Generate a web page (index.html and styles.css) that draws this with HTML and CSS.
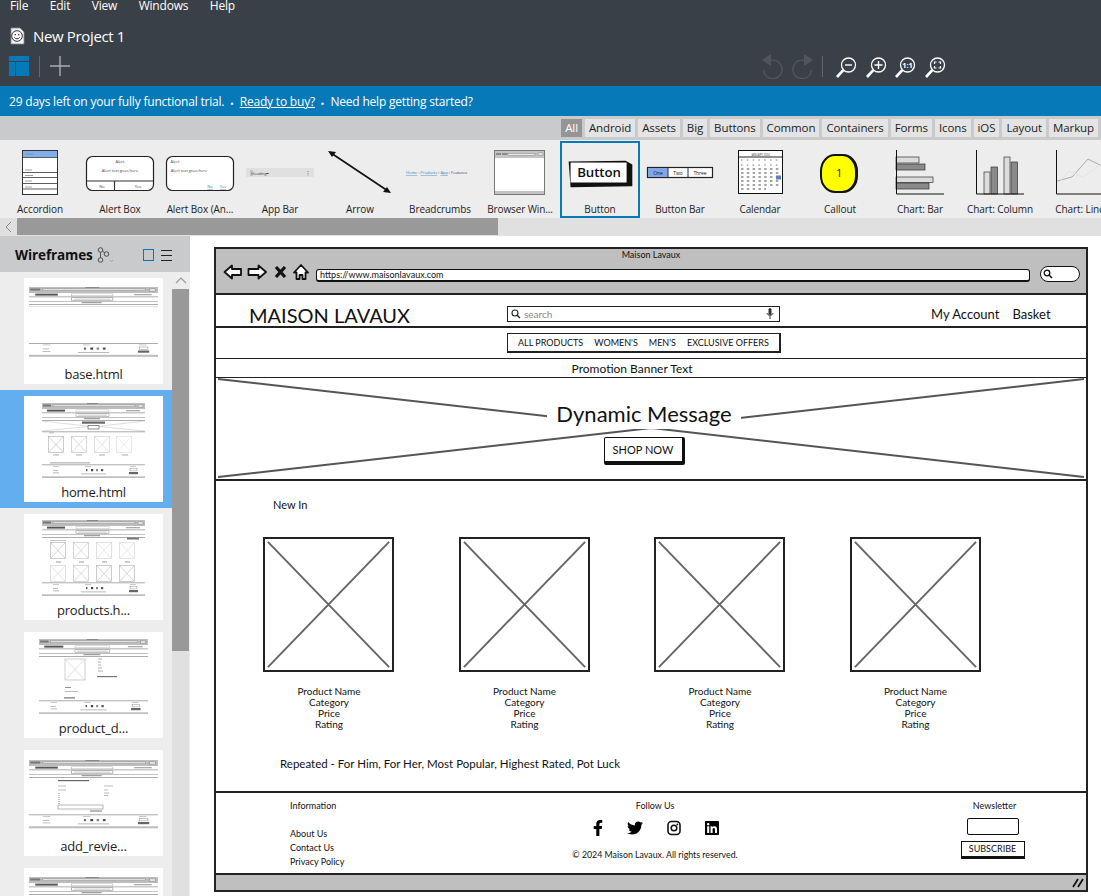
FILE: index.html
```html
<!DOCTYPE html>
<html lang="en">
<head>
    <meta charset="UTF-8">
    <meta name="viewport" content="width=device-width, initial-scale=1.0">
    <title>New Project 1</title>
    <link rel="stylesheet" href="styles.css">
</head>
<body>
    <!-- shared bits of the small page previews -->
    <svg class="defs" width="0" height="0" aria-hidden="true">
        <defs>
            <g id="mini-top">
                <rect width="103" height="6" fill="#bdbdbd"/>
                <rect x="11" y="2" width="82" height="1.6" fill="#fff" stroke="#666" stroke-width=".4"/>
                <rect x="1" y="1.5" width="8" height="2" fill="#777"/>
                <rect x="96" y="2" width="5" height="2" fill="#fff" stroke="#666" stroke-width=".4"/>
                <rect x="45" y="0" width="11" height="1" fill="#888"/>
                <rect x="5" y="6.6" width="18" height="2" fill="#555"/>
                <rect x="34" y="6.8" width="33" height="2" fill="#fff" stroke="#aaa" stroke-width=".4"/>
                <rect x="84" y="7" width="14" height="1.3" fill="#aaa"/>
                <rect y="9.6" width="103" height=".6" fill="#777"/>
                <rect x="34" y="10.8" width="33" height="2.6" fill="#fff" stroke="#666" stroke-width=".4"/>
                <rect x="36" y="11.7" width="29" height=".8" fill="#bbb"/>
                <rect y="14.2" width="103" height=".6" fill="#999"/>
                <rect x="42" y="15.2" width="16" height="1" fill="#888"/>
                <rect y="17" width="103" height=".7" fill="#888"/>
            </g>
            <g id="mini-foot">
                <rect y="0" width="103" height=".7" fill="#888"/>
                <rect x="11" y="1.5" width="6" height=".8" fill="#bbb"/>
                <rect x="11" y="5.5" width="5" height=".8" fill="#aaa"/>
                <rect x="11" y="8" width="6" height=".8" fill="#aaa"/>
                <rect x="43" y="1.5" width="6" height=".8" fill="#bbb"/>
                <rect x="44" y="4.5" width="1.4" height="2.2" fill="#555"/>
                <rect x="49" y="4.5" width="2.2" height="2.2" fill="#444"/>
                <rect x="54" y="4.5" width="2" height="2.2" fill="#888"/>
                <rect x="59" y="4.5" width="2.2" height="2.2" fill="#555"/>
                <rect x="39" y="9" width="25" height=".8" fill="#aaa"/>
                <rect x="88" y="1.5" width="6" height=".8" fill="#bbb"/>
                <rect x="88" y="4" width="7" height="2.4" fill="#fff" stroke="#777" stroke-width=".4"/>
                <rect x="87" y="7.5" width="9" height="2.2" fill="#666"/>
                <rect y="11.8" width="103" height="2" fill="#bdbdbd"/>
            </g>
            <g id="mini-box">
                <rect x=".5" y=".5" width="15" height="16" fill="#fff" stroke="#aaa" stroke-width=".6"/>
                <path d="M1 1l14 15M15 1L1 16" stroke="#aaa" stroke-width=".5"/>
            </g>
        </defs>
    </svg>

    <header class="topbar">
        <nav class="menu">
            <span>File</span><span>Edit</span><span>View</span><span>Windows</span><span>Help</span>
        </nav>
        <div class="project">
            <svg width="16" height="18" viewBox="0 0 16 18">
                <path d="M2 1h9l4 4v12H2z" fill="#f4f4f4" stroke="#888" stroke-width=".8"/>
                <circle cx="8" cy="9" r="5.3" fill="#fff" stroke="#333"/>
                <circle cx="6.2" cy="7.8" r=".8" fill="#333"/>
                <circle cx="9.8" cy="7.8" r=".8" fill="#333"/>
                <path d="M5.3 10.4c1.4 1.9 4 1.9 5.4 0" fill="none" stroke="#333"/>
            </svg>
            <span class="project-name">New Project 1</span>
        </div>
        <div class="toolbar">
            <svg width="20" height="20" viewBox="0 0 20 20">
                <path d="M0 0h20v5H0zM0 6h6v14H0zM7 6h13v14H7z" fill="#067ab8"/>
            </svg>
            <span class="tool-sep"></span>
            <svg width="20" height="20" viewBox="0 0 20 20">
                <path d="M10 0v20M0 10h20" stroke="#a9adb0" stroke-width="1.4"/>
            </svg>
            <div class="tool-right">
                <svg width="21" height="25" viewBox="0 0 21 25">
                    <path d="M9 0v12L0 6z" fill="#50565c"/>
                    <path d="M4 9a9.3 9.3 0 1 1-2.5 7" fill="none" stroke="#50565c" stroke-width="1.3"/>
                </svg>
                <svg class="redo" width="21" height="25" viewBox="0 0 21 25">
                    <path d="M9 0v12L0 6z" fill="#50565c"/>
                    <path d="M4 9a9.3 9.3 0 1 1-2.5 7" fill="none" stroke="#50565c" stroke-width="1.3"/>
                </svg>
                <span class="tool-sep wide"></span>
                <svg class="zoom-icon" width="22" height="22" viewBox="0 0 22 22">
                    <circle cx="13.5" cy="8" r="7" fill="none" stroke="#fff" stroke-width="1.3"/>
                    <path d="M8.3 13.2L2 20" stroke="#fff" stroke-width="2.6"/>
                    <path d="M10 8h7" stroke="#fff" stroke-width="1.4"/>
                </svg>
                <svg class="zoom-icon" width="22" height="22" viewBox="0 0 22 22">
                    <circle cx="13.5" cy="8" r="7" fill="none" stroke="#fff" stroke-width="1.3"/>
                    <path d="M8.3 13.2L2 20" stroke="#fff" stroke-width="2.6"/>
                    <path d="M9.5 8h8M13.5 4v8" stroke="#fff" stroke-width="1.4"/>
                </svg>
                <svg class="zoom-icon" width="22" height="22" viewBox="0 0 22 22">
                    <circle cx="13.5" cy="8" r="7" fill="none" stroke="#fff" stroke-width="1.3"/>
                    <path d="M8.3 13.2L2 20" stroke="#fff" stroke-width="2.6"/>
                    <text x="13.5" y="10.8" class="zoom-text">1:1</text>
                </svg>
                <svg class="zoom-icon" width="22" height="22" viewBox="0 0 22 22">
                    <circle cx="13.5" cy="8" r="7" fill="none" stroke="#fff" stroke-width="1.3"/>
                    <path d="M8.3 13.2L2 20" stroke="#fff" stroke-width="2.6"/>
                    <path d="M10.5 7V5h2M14.5 5h2v2M16.5 9v2h-2M12.5 11h-2V9" fill="none" stroke="#fff" stroke-width="1.2"/>
                </svg>
            </div>
        </div>
    </header>

    <div class="trial">
        29 days left on your fully functional trial.
        <span class="dot">▪</span>
        <a href="#">Ready to buy?</a>
        <span class="dot">▪</span>
        Need help getting started?
    </div>

    <div class="tabs">
        <span class="tab active">All</span>
        <span class="tab">Android</span>
        <span class="tab">Assets</span>
        <span class="tab">Big</span>
        <span class="tab">Buttons</span>
        <span class="tab">Common</span>
        <span class="tab">Containers</span>
        <span class="tab">Forms</span>
        <span class="tab">Icons</span>
        <span class="tab">iOS</span>
        <span class="tab">Layout</span>
        <span class="tab">Markup</span>
    </div>

    <section class="library">
        <div class="lib-item">
            <svg class="lib-pic" viewBox="0 0 80 62">
                <rect x="22.5" y="9.5" width="35" height="44" fill="#fff" stroke="#333"/>
                <rect x="23" y="10" width="34" height="6" fill="#82aeee"/>
                <path d="M25 13h8M25 29h7M25 34.5h8M25 40h7M25 46h7" stroke="#888" stroke-width=".8"/>
                <path d="M23 16.5h34M23 31.5h34M23 36.5h34M23 42.5h34M23 48h34" stroke="#333" stroke-width=".8"/>
            </svg>
            <span>Accordion</span>
        </div>
        <div class="lib-item">
            <svg class="lib-pic" viewBox="0 0 80 62">
                <rect x="6.5" y="15.5" width="67" height="34" rx="6" fill="#fff" stroke="#222" stroke-width="1.2"/>
                <path d="M7 40h66M34.5 40v10" stroke="#333" stroke-width="1.2"/>
                <text x="40" y="22" class="mini-label">Alert</text>
                <text x="40" y="31" class="mini-label">Alert text goes here</text>
                <text x="22" y="47" class="mini-label">No</text>
                <text x="58" y="47" class="mini-label">Yes</text>
            </svg>
            <span>Alert Box</span>
        </div>
        <div class="lib-item">
            <svg class="lib-pic" viewBox="0 0 80 62">
                <rect x="6.5" y="15.5" width="67" height="34" rx="6" fill="#fff" stroke="#222" stroke-width="1.2"/>
                <text x="15" y="22" class="mini-label">Alert</text>
                <text x="29" y="31" class="mini-label">Alert text goes here</text>
                <text x="50" y="47" class="mini-label blue">No</text>
                <text x="63" y="47" class="mini-label blue">Yes</text>
            </svg>
            <span>Alert Box (An...</span>
        </div>
        <div class="lib-item">
            <svg class="lib-pic" viewBox="0 0 80 62">
                <rect x="6" y="27" width="68" height="9" fill="#e0e0e0"/>
                <path d="M10 30h3M10 32h3M10 34h3" stroke="#777" stroke-width=".5"/>
                <text x="19" y="33.5" class="mini-label">Heading</text>
                <path d="M26.5 32.5h2" stroke="#333"/>
                <path d="M68 30v.8M68 31.8v.8M68 33.6v.8" stroke="#777"/>
            </svg>
            <span>App Bar</span>
        </div>
        <div class="lib-item">
            <svg class="lib-pic" viewBox="0 0 80 62">
                <path d="M11 12l57 38" stroke="#111" stroke-width="1.6"/>
                <path d="M8 10l8 1-4 5zM71 52l-8-1 4-5z" fill="#111"/>
            </svg>
            <span>Arrow</span>
        </div>
        <div class="lib-item">
            <svg class="lib-pic" viewBox="0 0 80 62">
                <text x="6" y="33" class="mini-label start"><tspan class="blue">Home</tspan> › <tspan class="blue">Products</tspan> › <tspan class="blue">App</tspan> › Features</text>
            </svg>
            <span>Breadcrumbs</span>
        </div>
        <div class="lib-item">
            <svg class="lib-pic" viewBox="0 0 80 62">
                <rect x="14.5" y="9.5" width="50" height="44" fill="#fff" stroke="#777"/>
                <rect x="15" y="10" width="49" height="7" fill="#c4c4c4"/>
                <rect x="15" y="50" width="49" height="3" fill="#c4c4c4"/>
                <path d="M16 13h5M22 13h5" stroke="#777" stroke-width="1.5"/>
                <rect x="28" y="12.5" width="27" height="1.6" fill="#fff" stroke="#777" stroke-width=".5"/>
                <rect x="58" y="12" width="5" height="2" fill="#fff" stroke="#777" stroke-width=".5"/>
            </svg>
            <span>Browser Win...</span>
        </div>
        <div class="lib-item selected">
            <svg class="lib-pic" viewBox="0 0 80 62">
                <path d="M7 19l60-1 7 4 0 23-65 1z" fill="#111"/>
                <rect x="9" y="20" width="59" height="21" fill="#fff"/>
                <text x="39" y="35" class="button-label">Button</text>
            </svg>
            <span>Button</span>
        </div>
        <div class="lib-item">
            <svg class="lib-pic" viewBox="0 0 80 62">
                <rect x="7.5" y="26.5" width="65" height="10" fill="#fff" stroke="#222" stroke-width="1.2"/>
                <rect x="8" y="27" width="20" height="9" fill="#7fa8ea"/>
                <path d="M28 27v9M48 27v9" stroke="#333"/>
                <text x="18" y="33.5" class="mini-label big">One</text>
                <text x="38" y="33.5" class="mini-label big">Two</text>
                <text x="60" y="33.5" class="mini-label big">Three</text>
            </svg>
            <span>Button Bar</span>
        </div>
        <div class="lib-item">
            <svg class="lib-pic" viewBox="0 0 80 62">
                <rect x="18.5" y="9.5" width="44" height="43" fill="#fff" stroke="#111"/>
                <path d="M19 16h43" stroke="#222"/>
                <text x="40.5" y="14.5" class="mini-label small">JANUARY 2024</text>
                <path d="M21 19h39M21 24h39" stroke="#777" stroke-dasharray="1.5 4.3" stroke-width="1.2"/>
                <path d="M21 28h39M21 32h39M21 36h39M21 40h39M21 44h39M21 48h25" stroke="#888" stroke-dasharray="2.5 3.3" stroke-width="1.6"/>
                <rect x="56" y="34.5" width="5" height="4" fill="#5a80b8"/>
            </svg>
            <span>Calendar</span>
        </div>
        <div class="lib-item">
            <svg class="lib-pic" viewBox="0 0 80 62">
                <rect x="20" y="13" width="38" height="39" rx="15" ry="17" fill="#111"/>
                <rect x="22" y="15" width="33" height="35" rx="13" ry="15" fill="#ff0"/>
                <text x="39" y="36" class="callout-num">1</text>
            </svg>
            <span>Callout</span>
        </div>
        <div class="lib-item">
            <svg class="lib-pic" viewBox="0 0 80 62">
                <rect x="16" y="16" width="23" height="6" fill="#dcdcdc" stroke="#333" stroke-width=".7"/>
                <rect x="16" y="23" width="29" height="6" fill="#8a8a8a" stroke="#333" stroke-width=".7"/>
                <rect x="16" y="36" width="37" height="5.5" fill="#dcdcdc" stroke="#333" stroke-width=".7"/>
                <rect x="16" y="42" width="33" height="6" fill="#8a8a8a" stroke="#333" stroke-width=".7"/>
                <path d="M16.5 9v44H64" fill="none" stroke="#111"/>
            </svg>
            <span>Chart: Bar</span>
        </div>
        <div class="lib-item">
            <svg class="lib-pic" viewBox="0 0 80 62">
                <rect x="24" y="31" width="6" height="22" fill="#dcdcdc" stroke="#333" stroke-width=".7"/>
                <rect x="31" y="26" width="6.5" height="27" fill="#8a8a8a" stroke="#333" stroke-width=".7"/>
                <rect x="44" y="16" width="6" height="37" fill="#dcdcdc" stroke="#333" stroke-width=".7"/>
                <rect x="51" y="21" width="6.5" height="32" fill="#8a8a8a" stroke="#333" stroke-width=".7"/>
                <path d="M16.5 9v44H64" fill="none" stroke="#111"/>
            </svg>
            <span>Chart: Column</span>
        </div>
        <div class="lib-item">
            <svg class="lib-pic" viewBox="0 0 80 62">
                <path d="M17 40l15-4 16-18 16 8" fill="none" stroke="#aaa"/>
                <path d="M17 44l12-14 14 6 20-14" fill="none" stroke="#e2e2e2"/>
                <path d="M16.5 9v44H64" fill="none" stroke="#111"/>
            </svg>
            <span>Chart: Line</span>
        </div>
    </section>

    <div class="hscroll">
        <span class="hscroll-arrow">
            <svg width="7" height="12" viewBox="0 0 7 12"><path d="M6 1L1 6l5 5" fill="none" stroke="#888"/></svg>
        </span>
        <span class="hscroll-thumb"></span>
    </div>

    <main class="workspace">
        <aside class="panel">
            <div class="panel-head">
                <strong>Wireframes</strong>
                <svg class="branch" width="17" height="16" viewBox="0 0 17 16">
                    <g fill="none" stroke="#444" stroke-width=".9">
                        <circle cx="3.5" cy="3" r="2.3"/>
                        <circle cx="3.5" cy="13" r="2.3"/>
                        <circle cx="9.5" cy="7" r="2.3"/>
                        <path d="M3.5 5.3v5.4M5.5 4.3l2.2 1.3"/>
                        <path d="M13 13l1.5 1.5L16 13" stroke="#999"/>
                    </g>
                </svg>
                <span class="view-square"></span>
                <span class="view-lines"></span>
            </div>
            <div class="panel-body">
                <div class="page-list">
                    <div class="page-row">
                        <div class="page-card">
                            <div class="page-thumb">
                                <svg width="129" height="70" viewBox="0 0 129 70">
                                    <g transform="scale(1.252 1)"><use href="#mini-top"/></g>
                                    <rect y="19" width="129" height=".6" fill="#ccc"/>
                                    <g transform="translate(0 56) scale(1.252 1)"><use href="#mini-foot"/></g>
                                </svg>
                            </div>
                            <span class="page-name">base.html</span>
                        </div>
                    </div>
                    <div class="page-row selected">
                        <div class="page-card">
                            <div class="page-thumb">
                                <svg width="103" height="75" viewBox="0 0 103 75">
                                    <use href="#mini-top"/>
                                    <path d="M0 18l44 5M59 23l44-5M0 28l51-5 52 5" fill="none" stroke="#bbb" stroke-width=".5"/>
                                    <rect x="40" y="18.5" width="23" height="2.2" fill="#666"/>
                                    <rect x="46" y="22.6" width="11" height="3.4" fill="#fff" stroke="#444" stroke-width=".6"/>
                                    <rect y="28.5" width="103" height=".7" fill="#888"/>
                                    <rect x="7" y="29.5" width="5" height=".8" fill="#aaa"/>
                                    <use href="#mini-box" x="6" y="33"/>
                                    <use href="#mini-box" x="29" y="33" opacity=".8"/>
                                    <use href="#mini-box" x="52" y="33" opacity=".6"/>
                                    <use href="#mini-box" x="74" y="33" opacity=".4"/>
                                    <path d="M11 52h6M34 52h6M57 52h6M80 52h6" stroke="#999" stroke-width=".8"/>
                                    <rect x="8" y="59.5" width="40" height=".8" fill="#888"/>
                                    <use href="#mini-foot" y="61.5"/>
                                </svg>
                            </div>
                            <span class="page-name">home.html</span>
                        </div>
                    </div>
                    <div class="page-row">
                        <div class="page-card">
                            <div class="page-thumb">
                                <svg width="103" height="76" viewBox="0 0 103 76">
                                    <use href="#mini-top"/>
                                    <rect x="8" y="20" width="16" height=".8" fill="#bbb"/>
                                    <rect x="85" y="17.5" width="12" height="2" fill="#777"/>
                                    <use href="#mini-box" x="8" y="22"/>
                                    <use href="#mini-box" x="31" y="22" opacity=".8"/>
                                    <use href="#mini-box" x="54" y="22" opacity=".6"/>
                                    <use href="#mini-box" x="77" y="22" opacity=".5"/>
                                    <path d="M14 42h5M37 42h5M60 42h5M83 42h5" stroke="#999"/>
                                    <use href="#mini-box" x="8" y="45" opacity=".6"/>
                                    <use href="#mini-box" x="31" y="45" opacity=".8"/>
                                    <use href="#mini-box" x="54" y="45"/>
                                    <use href="#mini-box" x="77" y="45"/>
                                    <use href="#mini-foot" y="62.5"/>
                                </svg>
                            </div>
                            <span class="page-name">products.h...</span>
                        </div>
                    </div>
                    <div class="page-row">
                        <div class="page-card">
                            <div class="page-thumb">
                                <svg width="109" height="75" viewBox="0 0 109 75">
                                    <g transform="scale(1.058 1)"><use href="#mini-top"/></g>
                                    <rect x="26" y="20" width="20" height="21" fill="#fff" stroke="#bbb" stroke-width=".7"/>
                                    <path d="M26 20l20 21M46 20L26 41" stroke="#ccc" stroke-width=".6"/>
                                    <path d="M59 20h4M59 23h3M59 26h3M59 29h4M59 32h5" stroke="#999" stroke-width=".8"/>
                                    <rect x="58" y="37" width="20" height="1.2" fill="#777"/>
                                    <rect x="26" y="48" width="6" height=".8" fill="#777"/>
                                    <rect x="26" y="52" width="13" height=".8" fill="#aaa"/>
                                    <rect x="25" y="58" width="11" height="1.6" fill="#999"/>
                                    <g transform="translate(0 61.5) scale(1.058 1)"><use href="#mini-foot"/></g>
                                </svg>
                            </div>
                            <span class="page-name">product_d...</span>
                        </div>
                    </div>
                    <div class="page-row">
                        <div class="page-card">
                            <div class="page-thumb">
                                <svg width="129" height="69" viewBox="0 0 129 69">
                                    <g transform="scale(1.252 1)"><use href="#mini-top"/></g>
                                    <rect x="29" y="20" width="31" height="1.2" fill="#666"/>
                                    <path d="M29 26h8M29 30h8M75 26h9M75 30h4M75 33h5M75 35.5h4" stroke="#aaa" stroke-width=".8"/>
                                    <path d="M30 33v12" stroke="#888" stroke-dasharray="1 1"/>
                                    <rect x="29" y="45" width="45" height="4" fill="#fff" stroke="#888" stroke-width=".6"/>
                                    <rect x="61" y="50" width="12" height="2" fill="#bbb"/>
                                    <g transform="translate(0 54.5) scale(1.252 1)"><use href="#mini-foot"/></g>
                                </svg>
                            </div>
                            <span class="page-name">add_revie...</span>
                        </div>
                    </div>
                    <div class="page-row">
                        <div class="page-card">
                            <div class="page-thumb">
                                <svg width="129" height="70" viewBox="0 0 129 70">
                                    <g transform="scale(1.252 1)"><use href="#mini-top"/></g>
                                </svg>
                            </div>
                        </div>
                    </div>
                </div>
                <div class="panel-scroll">
                    <span class="panel-scroll-arrow">
                        <svg width="12" height="7" viewBox="0 0 12 7"><path d="M1 6l5-5 5 5" fill="none" stroke="#999" stroke-width="1.2"/></svg>
                    </span>
                    <span class="panel-scroll-thumb"></span>
                </div>
            </div>
        </aside>

        <div class="canvas">
            <div class="window">
                <div class="win-title">
                    <div class="win-caption">Maison Lavaux</div>
                    <div class="win-bar">
                        <svg class="win-nav" width="86" height="18" viewBox="0 0 86 18">
                            <g fill="#fff" stroke="#111" stroke-width="1.8" stroke-linejoin="round">
                                <path d="M1.5 9L9 2.5V6h9v6H9v3.5z"/>
                                <path d="M43 9l-7.5-6.5V6h-10v6h10v3.5z"/>
                                <path d="M71 9.5L78 2l7 7.5h-2.5V16h-3v-4h-3v4h-3V9.5z"/>
                            </g>
                            <path d="M53 4l9 10M62 4l-9 10" stroke="#111" stroke-width="3.2"/>
                        </svg>
                        <div class="address">https://www.maisonlavaux.com</div>
                        <div class="win-search">
                            <svg width="10" height="10" viewBox="0 0 10 10"><circle cx="4" cy="4" r="2.8" fill="none" stroke="#111" stroke-width="1.3"/><path d="M6 6l3 3" stroke="#111" stroke-width="1.5"/></svg>
                        </div>
                    </div>
                </div>

                <div class="site-head">
                    <div class="logo">MAISON LAVAUX</div>
                    <div class="site-search">
                        <svg width="10" height="10" viewBox="0 0 10 10"><circle cx="4" cy="4" r="3" fill="none" stroke="#222" stroke-width="1.1"/><path d="M6.2 6.2L9 9" stroke="#222" stroke-width="1.3"/></svg>
                        <span>search</span>
                        <svg class="mic" width="8" height="11" viewBox="0 0 8 11"><rect x="2.5" y="0" width="3" height="7" rx="1.5" fill="#333"/><path d="M1 5c0 3 6 3 6 0M4 8v3" fill="none" stroke="#333"/></svg>
                    </div>
                    <div class="site-links"><span>My Account</span><span>Basket</span></div>
                </div>

                <div class="site-nav">
                    <div class="nav-box">
                        <span>ALL PRODUCTS</span><span>WOMEN'S</span><span>MEN'S</span><span>EXCLUSIVE OFFERS</span>
                    </div>
                </div>

                <div class="promo">Promotion Banner Text</div>

                <div class="hero">
                    <svg class="hero-cross" viewBox="0 0 870 101" preserveAspectRatio="none">
                        <path d="M2 1l866 98M2 99L868 1" stroke="#555" stroke-width="2"/>
                    </svg>
                    <h1 class="hero-title">Dynamic Message</h1>
                    <button class="btn-shop">SHOP NOW</button>
                </div>

                <div class="content">
                    <div class="section-label">New In</div>
                    <div class="products">
                        <div class="product">
                            <svg class="product-pic" viewBox="0 0 131 135" preserveAspectRatio="none"><path d="M3 3l125 129M128 3L3 132" stroke="#666" stroke-width="2"/></svg>
                            <p>Product Name<br>Category<br>Price<br>Rating</p>
                        </div>
                        <div class="product">
                            <svg class="product-pic" viewBox="0 0 131 135" preserveAspectRatio="none"><path d="M3 3l125 129M128 3L3 132" stroke="#666" stroke-width="2"/></svg>
                            <p>Product Name<br>Category<br>Price<br>Rating</p>
                        </div>
                        <div class="product">
                            <svg class="product-pic" viewBox="0 0 131 135" preserveAspectRatio="none"><path d="M3 3l125 129M128 3L3 132" stroke="#666" stroke-width="2"/></svg>
                            <p>Product Name<br>Category<br>Price<br>Rating</p>
                        </div>
                        <div class="product">
                            <svg class="product-pic" viewBox="0 0 131 135" preserveAspectRatio="none"><path d="M3 3l125 129M128 3L3 132" stroke="#666" stroke-width="2"/></svg>
                            <p>Product Name<br>Category<br>Price<br>Rating</p>
                        </div>
                    </div>
                    <div class="repeat-note">Repeated - For Him, For Her, Most Popular, Highest Rated, Pot Luck</div>
                </div>

                <footer class="site-foot">
                    <div class="foot-info">
                        <div>Information</div>
                        <ul>
                            <li>About Us</li>
                            <li>Contact Us</li>
                            <li>Privacy Policy</li>
                        </ul>
                    </div>
                    <div class="foot-social">
                        <div>Follow Us</div>
                        <div class="social-icons">
                            <svg width="10" height="16" viewBox="0 0 320 512"><path d="M279.14 288l14.22-92.66h-88.91v-60.13c0-25.35 12.42-50.06 52.24-50.06h40.42V6.26S260.43 0 225.36 0c-73.22 0-121.08 44.38-121.08 124.72v70.62H22.89V288h81.39v224h100.17V288z"/></svg>
                            <svg width="16" height="16" viewBox="0 0 512 512"><path d="M459.37 151.716c.325 4.548.325 9.097.325 13.645 0 138.72-105.583 298.558-298.558 298.558-59.452 0-114.68-17.219-161.137-47.106 8.447.974 16.568 1.299 25.34 1.299 49.055 0 94.213-16.568 130.274-44.832-46.132-.975-84.792-31.188-98.112-72.772 6.498.974 12.995 1.624 19.818 1.624 9.421 0 18.843-1.3 27.614-3.573-48.081-9.747-84.143-51.98-84.143-102.985v-1.299c13.969 7.797 30.214 12.67 47.431 13.319-28.264-18.843-46.781-51.005-46.781-87.391 0-19.492 5.197-37.36 14.294-52.954 51.655 63.675 129.3 105.258 216.365 109.807-1.624-7.797-2.599-15.918-2.599-24.04 0-57.828 46.782-104.934 104.934-104.934 30.213 0 57.502 12.67 76.67 33.137 23.715-4.548 46.456-13.32 66.599-25.34-7.798 24.366-24.366 44.833-46.132 57.827 21.117-2.273 41.584-8.122 60.426-16.243-14.292 20.791-32.161 39.308-52.628 54.253z"/></svg>
                            <svg width="14" height="16" viewBox="0 0 14 16"><rect x="1" y="1.5" width="12" height="13" rx="3.5" fill="none" stroke="#111" stroke-width="1.6"/><circle cx="7" cy="8" r="2.8" fill="none" stroke="#111" stroke-width="1.5"/><circle cx="10.4" cy="4.4" r=".9" fill="#111"/></svg>
                            <svg width="14" height="16" viewBox="0 0 448 512"><path d="M416 32H31.9C14.3 32 0 46.5 0 64.3v383.4C0 465.5 14.3 480 31.9 480H416c17.6 0 32-14.5 32-32.3V64.3c0-17.8-14.4-32.3-32-32.3zM135.4 416H69V202.2h66.5V416zm-33.2-243c-21.3 0-38.5-17.3-38.5-38.5S80.9 96 102.2 96c21.2 0 38.5 17.3 38.5 38.5 0 21.3-17.2 38.5-38.5 38.5zm282.1 243h-66.4V312c0-24.8-.5-56.7-34.5-56.7-34.6 0-39.9 27-39.9 54.9V416h-66.4V202.2h63.7v29.2h.9c8.9-16.8 30.6-34.5 62.9-34.5 67.2 0 79.7 44.3 79.7 101.9V416z"/></svg>
                        </div>
                        <div class="copyright">© 2024 Maison Lavaux. All rights reserved.</div>
                    </div>
                    <div class="foot-news">
                        <div>Newsletter</div>
                        <span class="news-input"></span>
                        <button class="btn-sub">SUBSCRIBE</button>
                    </div>
                </footer>

                <div class="win-status">
                    <svg width="12" height="10" viewBox="0 0 12 10"><path d="M1 9l5-8M6 9l5-8" stroke="#111" stroke-width="1.8"/></svg>
                </div>
            </div>
        </div>
    </main>
</body>
</html>
```

FILE: styles.css
```css
* {
    box-sizing: border-box;
}
html, body {
    height: 100%;
}
body {
    display: flex;
    flex-direction: column;
    height: 896px;
    margin: 0;
    overflow: hidden;
    background-color: #fff;
    color: #1c1c1c;
    font-family: "Open Sans", "Noto Sans", sans-serif;
    font-size: 12px;
}
.defs {
    display: block;
    flex: none;
}

/* dark app header */
.topbar {
    flex: none;
    height: 86px;
    background-color: #3a4047;
    color: #fff;
}
.menu {
    display: flex;
    gap: 21.5px;
    height: 25px;
    padding-left: 10px;
    font-size: 12px;
    letter-spacing: -.2px;
    line-height: 12px;
}
.project {
    display: flex;
    align-items: center;
    gap: 8px;
    height: 22px;
    padding-left: 9px;
}
.project-name {
    font-size: 15px;
    letter-spacing: -.35px;
}
.toolbar {
    display: flex;
    align-items: center;
    height: 26px;
    margin-top: 6px;
    padding-left: 9px;
}
.tool-sep {
    width: 1px;
    height: 21px;
    margin: 0 10px;
    background-color: #62676d;
}
.tool-right {
    display: flex;
    align-items: center;
    margin-left: 692px;
}
.tool-right svg {
    margin-right: 9px;
}
.tool-right .redo {
    transform: scaleX(-1);
    margin-right: 0;
}
.tool-right .tool-sep.wide {
    margin: 0 12px 0 9px;
}
.tool-right .zoom-icon {
    margin: 4px 7.5px 0 0;
}
.zoom-text {
    fill: #fff;
    font-size: 7.5px;
    font-weight: 700;
    text-anchor: middle;
}

/* trial strip */
.trial {
    flex: none;
    height: 30px;
    padding-left: 9px;
    background-color: #067ab8;
    color: #fff;
    font-size: 12px;
    letter-spacing: -.2px;
    line-height: 31px;
}
.trial a {
    color: #fff;
}
.trial .dot {
    margin: 0 3.5px;
    font-size: 8px;
}

/* library */
.tabs {
    display: flex;
    flex: none;
    justify-content: flex-end;
    align-items: center;
    gap: 3px;
    height: 24px;
    padding-right: 3px;
    background-color: #c9cacc;
}
.tab {
    height: 18px;
    padding: 0 4px;
    background-color: #e4e4e4;
    font-size: 11.5px;
    letter-spacing: -.1px;
    line-height: 18px;
}
.tab.active {
    background-color: #959595;
    color: #fff;
}
.library {
    display: flex;
    flex: none;
    height: 78px;
    overflow: hidden;
    background-color: #ededed;
}
.lib-item {
    display: flex;
    flex: none;
    flex-direction: column;
    align-items: center;
    width: 80px;
    height: 78px;
    padding-top: 1px;
    font-size: 10px;
    letter-spacing: -.1px;
    line-height: 13px;
    white-space: nowrap;
}
.lib-item.selected {
    height: 77px;
    margin-top: 1px;
    padding-top: 0;
    border: 2px solid #067ab8;
}
.lib-pic {
    flex: none;
    width: 80px;
    height: 62px;
}
.lib-item.selected .lib-pic {
    width: 76px;
    height: 60px;
}
.mini-label {
    fill: #444;
    font-size: 4.1px;
    letter-spacing: -.05px;
    text-anchor: middle;
}
.mini-label.start {
    text-anchor: start;
}
.mini-label.big {
    fill: #222;
    font-size: 5px;
}
.mini-label.small {
    font-size: 2.8px;
}
.blue {
    fill: #3a7fc0;
    text-decoration: underline;
}
.button-label {
    fill: #111;
    font-size: 14px;
    font-weight: 600;
    text-anchor: middle;
}
.callout-num {
    fill: #111;
    font-size: 11px;
    text-anchor: middle;
}
.hscroll {
    display: flex;
    flex: none;
    height: 18px;
    background-color: #e0e0e0;
}
.hscroll-arrow {
    display: flex;
    align-items: center;
    justify-content: center;
    width: 17px;
    height: 17px;
}
.hscroll-thumb {
    width: 481px;
    height: 17px;
    background-color: #999;
}

/* main area */
.workspace {
    display: flex;
    flex: 1;
    min-height: 0;
}
.panel {
    display: flex;
    flex: none;
    flex-direction: column;
    width: 190px;
    background-color: #ededed;
}
.panel-head {
    display: flex;
    flex: none;
    align-items: center;
    height: 36px;
    padding: 2px 0 0 15px;
    background-color: #c9cacc;
    color: #111;
}
.panel-head strong {
    font-size: 13.5px;
    font-weight: 700;
    letter-spacing: -.1px;
}
.branch {
    margin-left: 4px;
}
.view-square {
    width: 11px;
    height: 12px;
    margin-left: 29px;
    border: 1px solid #067ab8;
}
.view-lines {
    width: 11px;
    height: 11px;
    margin-left: 7px;
    border-top: 1.5px solid #222;
    border-bottom: 1.5px solid #222;
    background: linear-gradient(#222, #222) center / 100% 1px no-repeat;
}
.panel-body {
    display: flex;
    flex: 1;
    min-height: 0;
}
.page-list {
    width: 172px;
    overflow: hidden;
}
.page-row {
    height: 118px;
    padding: 6px 9px 6px 24px;
}
.page-row.selected {
    background-color: #62aeee;
}
.page-card {
    height: 106px;
    background-color: #fff;
    text-align: center;
}
.page-thumb {
    display: flex;
    align-items: center;
    justify-content: center;
    height: 88px;
}
.page-name {
    display: block;
    font-size: 13px;
    letter-spacing: -.2px;
    line-height: 16px;
}
.panel-scroll {
    display: flex;
    flex-direction: column;
    width: 17px;
    background-color: #e0e0e0;
}
.panel-scroll-arrow {
    display: flex;
    flex: none;
    align-items: center;
    justify-content: center;
    height: 17px;
    background-color: #ededed;
}
.panel-scroll-thumb {
    height: 362px;
    background-color: #999;
}

/* the wireframe */
.canvas {
    flex: 1;
    padding: 11px 0 0 24px;
    background-color: #fff;
    font-family: Lato, "Open Sans", sans-serif;
    color: #111;
}
.window {
    display: flex;
    flex-direction: column;
    width: 874px;
    height: 645px;
    border: 2px solid #222;
}
.win-title {
    flex: none;
    height: 46px;
    border-bottom: 2px solid #222;
    background-color: #bfbfbf;
}
.win-caption {
    height: 14px;
    font-size: 9px;
    line-height: 12px;
    text-align: center;
}
.win-bar {
    display: flex;
    align-items: center;
    padding: 0 6px 0 7px;
}
.win-nav {
    flex: none;
    margin: 0 7px 4px 0;
}
.address {
    flex: 1;
    height: 13px;
    margin-top: 2px;
    padding-left: 3px;
    border: 1.5px solid #111;
    border-bottom-width: 2px;
    border-radius: 3px;
    background-color: #fff;
    font-size: 9px;
    line-height: 9px;
}
.win-search {
    display: flex;
    align-items: center;
    width: 40px;
    height: 16px;
    margin-left: 10px;
    padding-left: 2px;
    border: 1.5px solid #111;
    border-radius: 8px;
    background-color: #fff;
}
.site-head {
    display: flex;
    flex: none;
    align-items: center;
    height: 33px;
    padding: 6px 0 0 33px;
    border-bottom: 2px solid #222;
}
.logo {
    width: 258px;
    padding-top: 3px;
    font-size: 20px;
    line-height: 28px;
}
.site-search {
    display: flex;
    align-items: center;
    gap: 3px;
    width: 273px;
    height: 16px;
    padding: 0 5px 0 3px;
    border: 1.5px solid #222;
    color: #888;
    font-size: 10px;
}
.mic {
    margin-left: auto;
}
.site-links {
    display: flex;
    gap: 13px;
    margin-left: 151px;
    font-size: 13px;
}
.site-nav {
    flex: none;
    height: 31px;
    padding: 5px 0 0 291px;
    border-bottom: 1.5px solid #222;
}
.nav-box {
    display: flex;
    gap: 11px;
    width: 274px;
    height: 20px;
    padding-left: 10px;
    border: 2px solid #222;
    border-top-width: 1.5px;
    border-left-width: 1.5px;
    font-size: 9px;
    line-height: 17px;
    white-space: nowrap;
}
.promo {
    flex: none;
    height: 19px;
    padding-right: 38px;
    border-bottom: 1.5px solid #222;
    font-size: 12px;
    line-height: 19px;
    text-align: center;
}
.hero {
    display: flex;
    position: relative;
    flex: none;
    flex-direction: column;
    align-items: center;
    height: 103px;
    padding: 21px 14px 0 0;
    border-bottom: 2px solid #222;
}
.hero-cross {
    position: absolute;
    top: 0;
    left: 0;
    width: 100%;
    height: 100%;
}
.hero-title {
    position: relative;
    margin: 0;
    padding: 0 9px;
    background-color: #fff;
    font-size: 22px;
    font-weight: 400;
    line-height: 30px;
}
.btn-shop {
    position: relative;
    width: 81px;
    height: 28px;
    margin-top: 8px;
    padding: 0;
    border: 1.5px solid #111;
    border-right-width: 3px;
    border-bottom-width: 4px;
    border-radius: 2px;
    background-color: #fff;
    color: #111;
    font-family: inherit;
    font-size: 11px;
}
.content {
    flex: none;
    height: 312px;
    padding: 18px 0 0 47px;
    border-bottom: 2px solid #222;
}
.section-label {
    margin-left: 10px;
    font-size: 11px;
    line-height: 12px;
}
.products {
    display: grid;
    grid-template-columns: repeat(4, 131px);
    column-gap: 64.5px;
    margin-top: 26px;
}
.product p {
    margin: 14px 0 0;
    padding-left: 1px;
    font-size: 10px;
    line-height: 11px;
    text-align: center;
}
.product-pic {
    display: block;
    width: 131px;
    height: 135px;
    border: 2px solid #222;
}
.repeat-note {
    margin: 27px 0 0 17px;
    font-size: 11.5px;
    line-height: 14px;
}
.site-foot {
    display: grid;
    flex: none;
    grid-template-columns: 319px 240px 1fr;
    height: 82px;
    padding-top: 7px;
    border-bottom: 2px solid #222;
    font-size: 9px;
    line-height: 12px;
}
.foot-info {
    padding-left: 74px;
}
.foot-info ul {
    margin: 16px 0 0;
    padding: 0;
    list-style: none;
}
.foot-info li {
    height: 14px;
}
.foot-social {
    display: flex;
    flex-direction: column;
    align-items: center;
}
.social-icons {
    display: flex;
    align-items: center;
    gap: 24px;
    height: 16px;
    margin: 8px 0 0 2px;
}
.copyright {
    margin-top: 13px;
    font-size: 8.8px;
}
.foot-news {
    display: flex;
    flex-direction: column;
    align-items: center;
    padding-left: 128px;
}
.news-input {
    width: 52px;
    height: 17px;
    margin: 6px 4px 0 0;
    border: 1.5px solid #111;
    border-radius: 2px;
}
.btn-sub {
    width: 64px;
    height: 18px;
    margin: 6px 4px 0 0;
    padding: 0;
    border: 1.5px solid #111;
    border-bottom-width: 3px;
    background-color: #fff;
    color: #111;
    font-family: inherit;
    font-size: 9px;
    line-height: 10px;
}
.win-status {
    display: flex;
    flex: 1;
    align-items: center;
    justify-content: flex-end;
    padding-right: 2px;
    background-color: #bfbfbf;
}
```
